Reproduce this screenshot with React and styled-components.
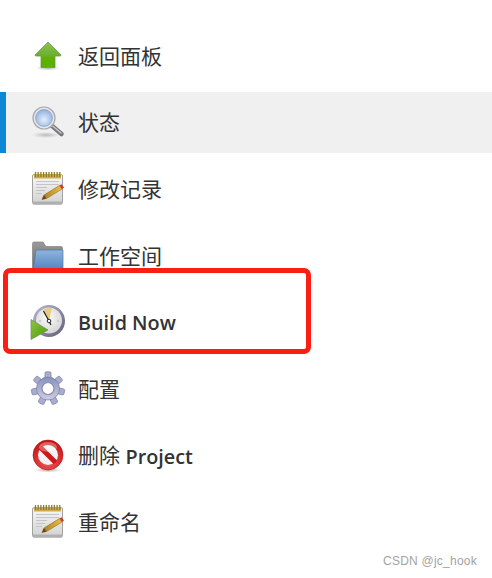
import React from 'react';
import styled, { createGlobalStyle } from 'styled-components';

const Global = createGlobalStyle`
  html, body { margin: 0; padding: 0; background: #fff; }
  body { width: 492px; height: 578px; overflow: hidden; position: relative; }
`;

const Menu = styled.ul`
  list-style: none;
  margin: 0;
  padding: 25px 0 0;
  display: flex;
  flex-direction: column;
  gap: 5.7px;
`;

const Row = styled.li`
  height: 61px;
  display: flex;
  align-items: center;
  padding-left: 30px;
  gap: 12px;
  background: ${(p) => (p.$active ? '#f0f0f0' : 'transparent')};
  box-shadow: ${(p) => (p.$active ? 'inset 6px 0 0 #0b87d6' : 'none')};
`;

const Label = styled.span`
  font-family: 'Open Sans', 'Noto Sans CJK SC', sans-serif;
  font-size: 21px;
  font-weight: 400;
  color: #333;
  line-height: 28px;
`;

const Strong = styled.span`
  font-family: 'Open Sans', sans-serif;
  font-weight: 600;
  font-size: 19.8px;
  vertical-align: -1px;
`;

const Highlight = styled.div`
  position: absolute;
  left: 3px;
  top: 268px;
  width: 308px;
  height: 86px;
  box-sizing: border-box;
  border: 5px solid #fb1f13;
  border-radius: 7px;
`;

const Watermark = styled.div`
  position: absolute;
  right: 15px;
  top: 553px;
  font-family: 'Liberation Sans', sans-serif;
  font-size: 12px;
  letter-spacing: 0.02em;
  line-height: 16px;
  color: #a3a3a3;
`;

const Svg = styled.svg`
  width: 36px;
  height: 36px;
  display: block;
  flex: none;
`;

const ArrowIcon = () => (
  <Svg viewBox="0 0 36 36">
    <defs>
      <linearGradient id="arr" x1="0" y1="0" x2="0" y2="1">
        <stop offset="0" stopColor="#8cc25a" />
        <stop offset="1" stopColor="#4e9e00" />
      </linearGradient>
      <radialGradient id="arrS">
        <stop offset="0" stopColor="#000" stopOpacity=".3" />
        <stop offset="1" stopColor="#000" stopOpacity="0" />
      </radialGradient>
    </defs>
    <ellipse cx="18" cy="30" rx="12" ry="2.5" fill="url(#arrS)" />
    <path d="M18 4 L31 17 Q31 18 30 18 H25 V29.5 H11 V18 H6 Q5 18 5 17 Z" fill="url(#arr)" stroke="#6a9c40" strokeWidth=".8" />
    <path d="M12 19 H24.2 V29 H12 Z" fill="#5cb000" />
  </Svg>
);

const LensIcon = () => (
  <Svg viewBox="0 0 36 36">
    <defs>
      <radialGradient id="lens" cx=".5" cy=".6" r=".6">
        <stop offset="0" stopColor="#e4eefa" />
        <stop offset="1" stopColor="#8fb2de" />
      </radialGradient>
      <radialGradient id="lensS">
        <stop offset="0" stopColor="#000" stopOpacity=".22" />
        <stop offset="1" stopColor="#000" stopOpacity="0" />
      </radialGradient>
    </defs>
    <ellipse cx="16" cy="31" rx="14" ry="3" fill="url(#lensS)" />
    <path d="M21 21 L31.5 30" stroke="#77777a" strokeWidth="4.5" strokeLinecap="round" />
    <path d="M21.5 21 L31 29" stroke="#c8c8c8" strokeWidth="1.5" strokeLinecap="round" />
    <circle cx="14" cy="14" r="11" fill="#e8e8ea" stroke="#a6a6aa" strokeWidth="1.2" />
    <circle cx="14" cy="14" r="8.4" fill="url(#lens)" stroke="#7f9fcb" strokeWidth=".8" />
  </Svg>
);

const NoteIcon = () => (
  <Svg viewBox="0 0 36 36">
    <defs>
      <linearGradient id="note" x1="0" y1="0" x2="0" y2="1">
        <stop offset="0" stopColor="#f8f8f8" />
        <stop offset="1" stopColor="#d2d2d2" />
      </linearGradient>
      <linearGradient id="pencil" x1="0" y1="0" x2="1" y2="0">
        <stop offset="0" stopColor="#a87a1e" />
        <stop offset="1" stopColor="#f0c040" />
      </linearGradient>
    </defs>
    <rect x="2.5" y="3.5" width="30" height="29.5" rx="1.5" fill="url(#note)" stroke="#a2a2a2" />
    <rect x="3" y="30.5" width="29" height="3" fill="#b0b0b0" />
    <rect x="4" y="3" width="27" height="4.5" fill="#c9ad4e" />
    <path d="M5.5 1 V6 M8.2 1 V6 M10.9 1 V6 M13.6 1 V6 M16.3 1 V6 M19 1 V6 M21.7 1 V6 M24.4 1 V6 M27.1 1 V6 M29.8 1 V6" stroke="#8f7a2a" strokeWidth="1.3" />
    <path d="M6 10.5 H29 M6 13.5 H29 M6 16.5 H17 M6 19.5 H15 M6 22.5 H12" stroke="#c4c4c4" strokeWidth="1" />
    <path d="M12 28.5 L14 24 L29.5 14.5 L32 18 L16.5 27.5 Z" fill="url(#pencil)" stroke="#8e6a1e" strokeWidth=".6" />
    <path d="M12 28.5 L14 24 L16.5 27.5 Z" fill="#5a4a2a" />
    <path d="M29.5 14.5 L31.5 13.2 L34 16.6 L32 18 Z" fill="#d9332f" />
  </Svg>
);

const FolderIcon = () => (
  <Svg viewBox="0 0 36 36">
    <defs>
      <linearGradient id="fback" x1="0" y1="0" x2="0" y2="1">
        <stop offset="0" stopColor="#9a9a9a" />
        <stop offset="1" stopColor="#6a6a6a" />
      </linearGradient>
      <linearGradient id="ffront" x1="0" y1="0" x2="0" y2="1">
        <stop offset="0" stopColor="#8fb4de" />
        <stop offset="1" stopColor="#5283bf" />
      </linearGradient>
    </defs>
    <path d="M2.5 32 V5.5 Q2.5 4 4 4 H13 L16 8.5 H31 Q32.5 8.5 32.5 10 V14 H8 L4 32 Z" fill="url(#fback)" stroke="#777" strokeWidth=".6" />
    <path d="M6 12 H33 V30.5 Q33 32 31.5 32 H4 Q3 32 3.5 30.5 Z" fill="url(#ffront)" stroke="#4c79b0" strokeWidth=".7" />
  </Svg>
);

const ClockIcon = () => (
  <Svg viewBox="0 0 36 36">
    <defs>
      <linearGradient id="rim" x1="0" y1="0" x2="1" y2="1">
        <stop offset="0" stopColor="#b9b7d2" />
        <stop offset="1" stopColor="#5f5d78" />
      </linearGradient>
      <radialGradient id="face" cx=".45" cy=".4" r=".7">
        <stop offset="0" stopColor="#fbfbfb" />
        <stop offset="1" stopColor="#d0d0d0" />
      </radialGradient>
      <linearGradient id="play" x1="0" y1="0" x2="1" y2="1">
        <stop offset="0" stopColor="#8cc63f" />
        <stop offset="1" stopColor="#4e9a06" />
      </linearGradient>
    </defs>
    <circle cx="19" cy="17" r="16" fill="url(#rim)" />
    <circle cx="19" cy="16.5" r="13" fill="url(#face)" />
    <path d="M19 17 L13 6 Q17 3.5 22 4 Z" fill="#e6cc80" />
    <path d="M19 17 L13.5 7 M19 17 L21 21" stroke="#111" strokeWidth="1.1" fill="none" />
    <circle cx="19" cy="17" r="1.8" fill="#fff" stroke="#111" strokeWidth=".9" />
    <circle cx="10" cy="17" r="1" fill="#c4c4c4" />
    <circle cx="28" cy="17" r="1" fill="#c4c4c4" />
    <path d="M1 15.5 L18 26 L1 35.5 Z" fill="url(#play)" stroke="#77936a" strokeWidth=".8" />
  </Svg>
);

const GearIcon = () => {
  const teeth = [0, 51.4, 102.9, 154.3, 205.7, 257.1, 308.6];
  return (
    <Svg viewBox="0 0 36 36">
      <defs>
        <linearGradient id="gear" x1="0" y1="0" x2="0" y2="1">
          <stop offset="0" stopColor="#8492bd" />
          <stop offset="1" stopColor="#d2cde4" />
        </linearGradient>
      </defs>
      <g stroke="#7a7d9f" strokeWidth=".7" fill="#a9aed0">
        {teeth.map((a) => (
          <rect key={a} x="15" y="0.8" width="6" height="10" rx="1.3" transform={`rotate(${a} 18 17.5)`} />
        ))}
        <circle cx="18" cy="17.5" r="11.5" fill="url(#gear)" />
      </g>
      <circle cx="18" cy="17.5" r="6" fill="#fff" stroke="#8a8cab" strokeWidth="1.2" />
    </Svg>
  );
};

const StopIcon = () => (
  <Svg viewBox="0 0 36 36">
    <defs>
      <radialGradient id="stop" cx=".5" cy=".7" r=".7">
        <stop offset="0" stopColor="#f06060" />
        <stop offset="1" stopColor="#c00f0f" />
      </radialGradient>
      <radialGradient id="stopS">
        <stop offset="0" stopColor="#000" stopOpacity=".3" />
        <stop offset="1" stopColor="#000" stopOpacity="0" />
      </radialGradient>
    </defs>
    <ellipse cx="18" cy="32" rx="14" ry="2.5" fill="url(#stopS)" />
    <circle cx="18" cy="17" r="15" fill="url(#stop)" stroke="#b81414" strokeWidth=".6" />
    <circle cx="18" cy="17" r="10" fill="#f2f2f2" />
    <path d="M10.5 9.5 L25.5 24.5" stroke="#cf1717" strokeWidth="5" />
    <ellipse cx="18" cy="9" rx="9" ry="5" fill="#fff" opacity=".3" />
  </Svg>
);

export default function App() {
  return (
    <>
      <Global />
      <Menu>
        <Row><ArrowIcon /><Label>返回面板</Label></Row>
        <Row $active><LensIcon /><Label>状态</Label></Row>
        <Row><NoteIcon /><Label>修改记录</Label></Row>
        <Row><FolderIcon /><Label>工作空间</Label></Row>
        <Row><ClockIcon /><Label><Strong>Build Now</Strong></Label></Row>
        <Row><GearIcon /><Label>配置</Label></Row>
        <Row><StopIcon /><Label>删除 <Strong>Project</Strong></Label></Row>
        <Row><NoteIcon /><Label>重命名</Label></Row>
      </Menu>
      <Highlight />
      <Watermark>CSDN @jc_hook</Watermark>
    </>
  );
}
